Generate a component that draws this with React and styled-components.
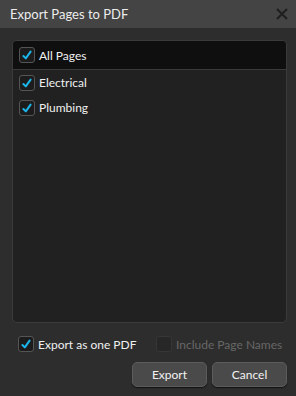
import styled, { createGlobalStyle } from 'styled-components';

const Global = createGlobalStyle`
  html, body { margin: 0; padding: 0; background: #2d2d2d; }
  body { font-family: Lato, 'Noto Sans', sans-serif; }
`;

const Dialog = styled.div`
  width: 296px;
  height: 396px;
  background: #2d2d2d;
  display: flex;
  flex-direction: column;
  box-sizing: border-box;
`;

const TitleBar = styled.div`
  height: 28px;
  flex: none;
  background: #444444;
  display: flex;
  align-items: center;
  justify-content: space-between;
  padding: 0 7px 0 10px;
  color: #ececec;
  font-size: 13px;
`;

const Close = styled.button`
  border: 0;
  background: none;
  padding: 0;
  width: 14px;
  height: 14px;
  display: flex;
  align-items: center;
  justify-content: center;
`;

const Body = styled.div`
  flex: 1;
  display: flex;
  flex-direction: column;
  padding: 12px 9px 9px 12px;
  min-height: 0;
`;

const Panel = styled.div`
  height: 283px;
  flex: none;
  background: #212121;
  border: 1px solid #3b3b3b;
  border-radius: 5px;
  box-sizing: border-box;
  overflow: hidden;
`;

const HeaderRow = styled.div`
  height: 28px;
  background: #0f0f0f;
  border-bottom: 1px solid #3a3a3a;
  display: flex;
  align-items: center;
  padding-left: 6px;
`;

const Rows = styled.div`
  display: flex;
  flex-direction: column;
`;

const Row = styled.div`
  height: 25px;
  display: flex;
  align-items: center;
  padding-left: 6px;
`;

const Label = styled.span`
  font-size: 12px;
  color: ${p => (p.$disabled ? '#676767' : '#f0f0f0')};
  margin-left: 4px;
  white-space: nowrap;
`;

const Box = styled.span`
  width: 16px;
  height: 16px;
  box-sizing: border-box;
  border-radius: 3px;
  border: 1px solid ${p => (p.$disabled ? '#363636' : '#555555')};
  background: ${p => (p.$disabled ? '#272727' : '#1c1c1c')};
  display: inline-flex;
  align-items: center;
  justify-content: center;
  flex: none;
`;

const Options = styled.div`
  display: flex;
  align-items: center;
  margin-top: 13px;
  padding-left: 6px;
  height: 16px;
`;

const Option = styled.label`
  display: flex;
  align-items: center;
  width: ${p => p.$w || 'auto'};
`;

const Buttons = styled.div`
  display: flex;
  justify-content: flex-end;
  gap: 5px;
  margin-top: 10px;
`;

const Button = styled.button`
  width: 75px;
  height: 25px;
  border-radius: 5px;
  border: 1px solid #5c5c5c;
  background: #4a4a4a;
  box-shadow: 0 1px 1px rgba(0, 0, 0, 0.6);
  color: #f2f2f2;
  font-family: Lato, 'Noto Sans', sans-serif;
  font-size: 12px;
  padding: 0;
`;

const Check = ({ checked, disabled }) => (
  <Box $disabled={disabled}>
    {checked && (
      <svg width="12" height="12" viewBox="0 0 12 12">
        <path d="M2.4 7 L4.8 9.4 L9.6 2.6" fill="none" stroke="#1bb5ea" strokeWidth="2" strokeLinecap="round" strokeLinejoin="round" />
      </svg>
    )}
  </Box>
);

const pages = ['Electrical', 'Plumbing'];

export default function App() {
  return (
    <Dialog>
      <Global />
      <TitleBar>
        <span>Export Pages to PDF</span>
        <Close aria-label="close">
          <svg width="12" height="12" viewBox="0 0 12 12">
            <path d="M1 1 L11 11 M11 1 L1 11" stroke="#1f1f1f" strokeWidth="2" />
          </svg>
        </Close>
      </TitleBar>
      <Body>
        <Panel>
          <HeaderRow>
            <Check checked />
            <Label>All Pages</Label>
          </HeaderRow>
          <Rows>
            {pages.map(p => (
              <Row key={p}>
                <Check checked />
                <Label>{p}</Label>
              </Row>
            ))}
          </Rows>
        </Panel>
        <Options>
          <Option $w="138px">
            <Check checked />
            <Label>Export as one PDF</Label>
          </Option>
          <Option>
            <Check disabled />
            <Label $disabled>Include Page Names</Label>
          </Option>
        </Options>
        <Buttons>
          <Button>Export</Button>
          <Button>Cancel</Button>
        </Buttons>
      </Body>
    </Dialog>
  );
}
